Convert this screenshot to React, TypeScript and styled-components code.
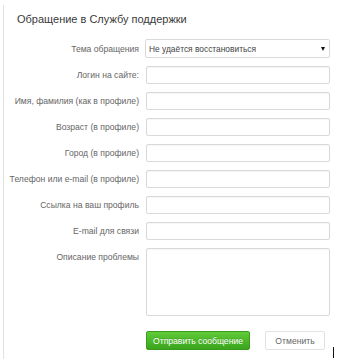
import React from "react";
import styled, { createGlobalStyle } from "styled-components";

const GlobalStyle = createGlobalStyle`
    html, body {
        margin: 0;
        padding: 0;
        background: #fff;
    }
    body {
        font-family: "Liberation Sans", Arial, sans-serif;
        color: #333;
    }
`;

const Page = styled.div`
    position: relative;
    width: 337px;
    height: 359px;
    padding: 5px 0 0 3px;
    box-sizing: border-box;
    overflow: hidden;
`;

const Panel = styled.div`
    border-left: 1px solid #e2e2e2;
    height: 354px;
    box-sizing: border-box;
`;

const Title = styled.h1`
    margin: 0;
    padding: 8px 0 0 13px;
    font-size: 11px;
    font-weight: normal;
    line-height: 13px;
    color: #3a3a3a;
`;

const Form = styled.div`
    display: grid;
    grid-template-columns: 135px 184px;
    column-gap: 7px;
    row-gap: 8px;
    margin-top: 13px;
`;

const Label = styled.label<{ $top?: boolean }>`
    font-size: 8.6px;
    color: #666;
    text-align: right;
    line-height: 18px;
    align-self: ${(p) => (p.$top ? "start" : "center")};
    white-space: nowrap;
`;

const Field = styled.div<{ $tall?: boolean }>`
    height: ${(p) => (p.$tall ? "68px" : "18px")};
    border: 1px solid #d9d9d9;
    border-radius: 2px;
    box-sizing: border-box;
    background: #fff;
    box-shadow: inset 0 1px 1px rgba(0, 0, 0, 0.04);
`;

const Select = styled.div`
    height: 19px;
    border: 1px solid #d9d9d9;
    border-radius: 2px;
    box-sizing: border-box;
    margin-left: -1px;
    display: flex;
    align-items: center;
    justify-content: space-between;
    padding: 0 4px 0 3px;
    font-size: 8.4px;
    color: #444;
`;

const Arrow = styled.span`
    width: 0;
    height: 0;
    border-left: 2px solid transparent;
    border-right: 2px solid transparent;
    border-top: 4px solid #111;
`;

const Actions = styled.div`
    grid-column: 2;
    display: flex;
    gap: 15px;
    margin-top: 7px;
`;

const Button = styled.button<{ $primary?: boolean }>`
    height: 19px;
    padding: 0;
    width: ${(p) => (p.$primary ? "104px" : "60px")};
    border-radius: 2px;
    font-family: "Liberation Sans", Arial, sans-serif;
    font-size: 8.6px;
    cursor: pointer;
    color: ${(p) => (p.$primary ? "#fff" : "#666")};
    border: 1px solid ${(p) => (p.$primary ? "#3c9a1f" : "#e2e2e2")};
    background: ${(p) =>
        p.$primary ? "linear-gradient(#5fcb38, #3aa51c)" : "#fff"};
    text-shadow: ${(p) => (p.$primary ? "0 -1px 0 rgba(0,0,0,0.15)" : "none")};
`;

const Cursor = styled.span`
    position: absolute;
    left: 333px;
    top: 347px;
    width: 1px;
    height: 11px;
    background: #111;
`;

const rows = [
    "Логин на сайте:",
    "Имя, фамилия (как в профиле)",
    "Возраст (в профиле)",
    "Город (в профиле)",
    "Телефон или e-mail (в профиле)",
    "Ссылка на ваш профиль",
    "E-mail для связи",
];

export default function App() {
    return (
        <Page>
            <GlobalStyle />
            <Panel>
                <Title>Обращение в Службу поддержки</Title>
                <Form>
                    <Label>Тема обращения</Label>
                    <Select>
                        <span>Не удаётся восстановиться</span>
                        <Arrow />
                    </Select>
                    {rows.map((r) => (
                        <React.Fragment key={r}>
                            <Label>{r}</Label>
                            <Field />
                        </React.Fragment>
                    ))}
                    <Label $top>Описание проблемы</Label>
                    <Field $tall />
                    <Actions>
                        <Button $primary>Отправить сообщение</Button>
                        <Button>Отменить</Button>
                    </Actions>
                </Form>
            </Panel>
            <Cursor />
        </Page>
    );
}
